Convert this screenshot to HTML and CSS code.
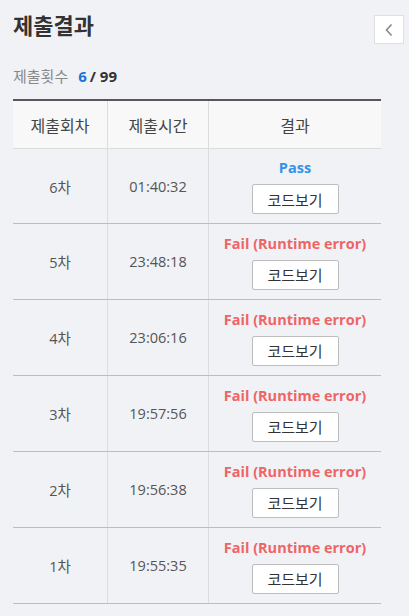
FILE: index.html
```html
<!DOCTYPE html>
<html lang="ko">
<head>
<meta charset="utf-8">
<link rel="stylesheet" href="styles.css">
</head>
<body>
<div class="panel">
  <div class="head">
    <h1 class="title">제출결과</h1>
    <button class="back" aria-label="닫기">
      <svg width="10" height="14" viewBox="0 0 10 14"><path d="M7.5 1.5 L2.5 7 L7.5 12.5" fill="none" stroke="#888" stroke-width="1.6"/></svg>
    </button>
  </div>
  <div class="count"><span class="count-label">제출횟수</span><span class="count-now">6</span><span class="count-total">/ 99</span></div>
  <table class="results">
    <thead>
      <tr><th class="c1">제출회차</th><th class="c2">제출시간</th><th class="c3">결과</th></tr>
    </thead>
    <tbody>
      <tr><td>6차</td><td>01:40:32</td><td><div class="status pass">Pass</div><button class="code">코드보기</button></td></tr>
      <tr><td>5차</td><td>23:48:18</td><td><div class="status fail">Fail (Runtime error)</div><button class="code">코드보기</button></td></tr>
      <tr><td>4차</td><td>23:06:16</td><td><div class="status fail">Fail (Runtime error)</div><button class="code">코드보기</button></td></tr>
      <tr><td>3차</td><td>19:57:56</td><td><div class="status fail">Fail (Runtime error)</div><button class="code">코드보기</button></td></tr>
      <tr><td>2차</td><td>19:56:38</td><td><div class="status fail">Fail (Runtime error)</div><button class="code">코드보기</button></td></tr>
      <tr><td>1차</td><td>19:55:35</td><td><div class="status fail">Fail (Runtime error)</div><button class="code">코드보기</button></td></tr>
    </tbody>
  </table>
</div>
</body>
</html>
```
FILE: styles.css
```css
html, body {
  margin: 0;
  padding: 0;
  background: #f1f2f6;
  font-family: "Open Sans", "Noto Sans CJK KR", sans-serif;
  color: #444;
}
.panel {
  padding: 12px 5px 0 13px;
}
.head {
  display: flex;
  justify-content: space-between;
  align-items: flex-start;
}
.title {
  margin: 0;
  font-size: 22px;
  line-height: 26px;
  font-weight: 700;
  color: #333;
}
.back {
  width: 30px;
  height: 29px;
  margin-top: 3px;
  padding: 0;
  background: #fff;
  border: 1px solid #e0e0e4;
  display: flex;
  align-items: center;
  justify-content: center;
}
.count {
  margin-top: 22px;
  font-size: 15px;
  line-height: 20px;
  display: flex;
  align-items: baseline;
}
.count-label {
  color: #888;
  margin-right: 10px;
}
.count-now {
  color: #1f74d8;
  font-weight: 700;
  margin-right: 3px;
}
.count-total {
  color: #333;
  font-weight: 700;
}
.results {
  margin-top: 13px;
  width: 368px;
  border-collapse: collapse;
  border-top: 2px solid #585858;
  font-size: 14.5px;
  text-align: center;
}
.results th {
  background: #f8f8f8;
  font-weight: 400;
  color: #444;
  height: 47px;
  padding: 0;
  border-bottom: 1px solid #dcdcdc;
  font-size: 16px;
}
.results th + th, .results td + td {
  border-left: 1px solid #dcdcdc;
}
.c1 { width: 94px; }
.c2 { width: 100px; }
.results td {
  height: 75px;
  padding: 0;
  border-bottom: 1px solid #bdbdbd;
  color: #555;
  vertical-align: middle;
}
.results tbody tr:first-child td {
  height: 74px;
}
.status {
  font-weight: 700;
  font-size: 14.5px;
  line-height: 20px;
  margin-bottom: 6px;
}
.pass { color: #3394e6; }
.fail { color: #ee6565; }
.code {
  width: 87px;
  height: 30px;
  padding: 0;
  background: #fff;
  border: 1px solid #bdbdbd;
  border-radius: 2px;
  font-family: "Noto Sans CJK KR", sans-serif;
  font-size: 15px;
  color: #333;
}
```
